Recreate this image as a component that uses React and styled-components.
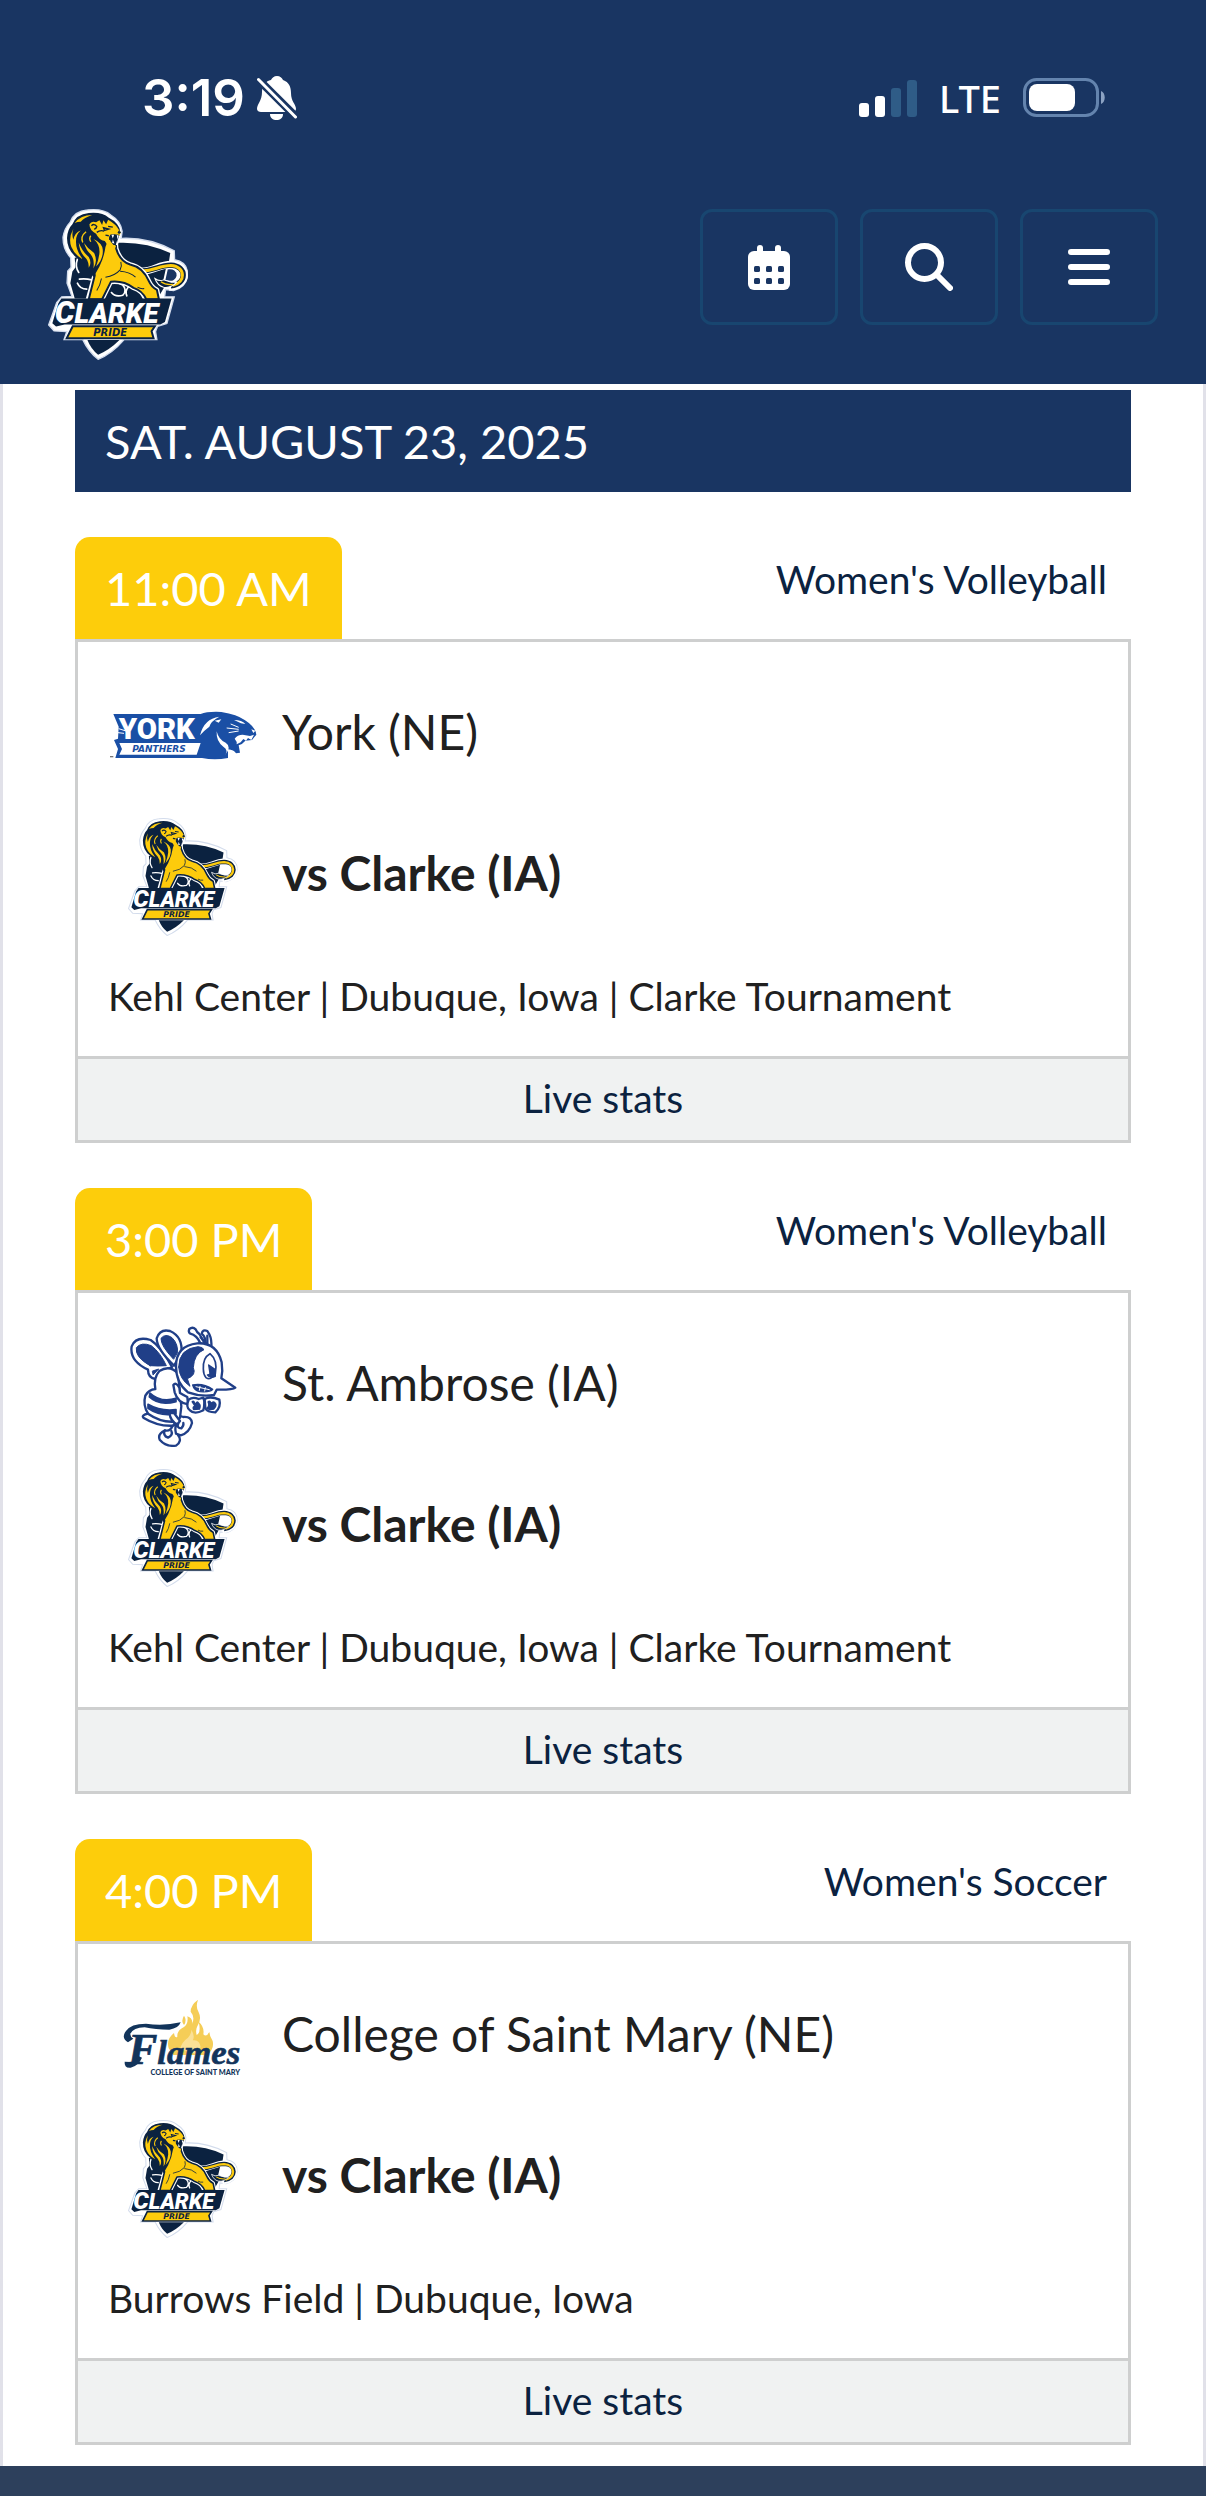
import React from "react";
import styled, { createGlobalStyle } from "styled-components";

const navy = "#193562";
const ink = "#0b2240";
const gold = "#fdcb0c";
const line = "#cecfcf";

const GlobalStyle = createGlobalStyle`
  *, *::before, *::after { box-sizing: border-box; }
  body { margin: 0; background: #ffffff; font-family: Lato, "Open Sans", sans-serif; color: #202020; }
  a { color: ${ink}; text-decoration: none; }
  h2, p { margin: 0; font-weight: 400; }
`;

const Page = styled.div`
  display: flex;
  flex-direction: column;
  min-height: 100vh;
`;

const Header = styled.header`
  background: ${navy};
`;

const StatusBar = styled.div`
  display: flex;
  align-items: center;
  justify-content: space-between;
  padding: 62px 100px 0 142px;
  color: #ffffff;
`;

const StatusGroup = styled.div`
  display: flex;
  align-items: center;
`;

const Clock = styled.span`
  font: 600 51px/72px Inter, sans-serif;
  padding-right: 12px;
`;

const Network = styled.span`
  font: 500 38px/72px "Noto Sans", sans-serif;
  padding: 0 22px;
`;

const Nav = styled.nav`
  display: flex;
  align-items: flex-start;
  justify-content: space-between;
  padding: 75px 48px 24px;
`;

const HomeLink = styled.a`
  display: block;
  height: 151px;
`;

const NavButtons = styled.div`
  display: flex;
  gap: 22px;
`;

const NavButton = styled.button`
  display: flex;
  align-items: center;
  justify-content: center;
  width: 138px;
  height: 116px;
  padding: 0;
  background: transparent;
  color: #ffffff;
  border: 3px solid #184670;
  border-radius: 12px;
`;

const Schedule = styled.main`
  display: flex;
  flex-direction: column;
  gap: 45px;
  padding: 6px 72px 21px;
  border: solid #e1e1e9;
  border-width: 0 3px;
`;

const DateBar = styled.h2`
  padding: 15px 30px;
  background: ${navy};
  color: #ffffff;
  font-size: 47px;
  line-height: 72px;
`;

const GameHead = styled.div`
  display: flex;
  justify-content: space-between;
  align-items: flex-start;
`;

const TimeTab = styled.div`
  padding: 15px 30px;
  background: #fdcd0b;
  color: #ffffff;
  border-radius: 15px 15px 0 0;
  font-size: 47px;
  line-height: 72px;
`;

const SportLink = styled.a`
  padding: 13px 24px;
  font-size: 39px;
  line-height: 58px;
`;

const Card = styled.div`
  border: 3px solid ${line};
`;

const CardBody = styled.div`
  padding: 19px 30px 30px;
`;

const Team = styled.div`
  display: flex;
  align-items: center;
  gap: 24px;
  height: 141px;
  font-size: 48px;
  line-height: 72px;
  font-weight: ${(p) => (p.$home ? 700 : 400)};
`;

const LogoBox = styled.div`
  display: flex;
  align-items: center;
  justify-content: center;
  width: 150px;
  height: 130px;
  padding-top: 8px;
`;

const Venue = styled.p`
  margin-top: 24px;
  font-size: 39px;
  line-height: 59px;
`;

const StatsLink = styled.a`
  display: block;
  border-top: 3px solid ${line};
  background: #f0f2f2;
  padding: 10px 0 12px;
  text-align: center;
  font-size: 39px;
  line-height: 59px;
`;

const BottomBar = styled.footer`
  flex: 1;
  min-height: 30px;
  background: #2d405c;
`;

const BellOff = () => (
  <svg width="40" height="44" viewBox="0 0 40 44" aria-label="Silent">
    <path d="M20 0c3 0 5 2 6 4 6 2 8 7 8 13 0 9 5 11 5 16 0 2-2 3-3 3H4c-2 0-4-1-4-3 0-5 5-8 5-17C5 9 9 5 14 4c1-2 3-4 6-4z" fill="#fff" />
    <path d="M13 38h13c0 4-3 6-6.500 6S13 42 13 38z" fill="#fff" />
    <path d="M2 4l37 37" stroke={navy} strokeWidth="8" />
    <path d="M0 0h5v16H0z" fill={navy} />
    <path d="M1.500 3.500L38.500 41" stroke="#fff" strokeWidth="3" strokeLinecap="round" />
  </svg>
);

const Signal = () => (
  <svg width="58" height="38" viewBox="0 0 58 38" aria-label="Signal">
    <rect x="0" y="24" width="10" height="14" rx="3" fill="#fff" />
    <rect x="16" y="17" width="10" height="21" rx="3" fill="#fff" />
    <rect x="32" y="9" width="10" height="29" rx="3" fill="#2f5c87" />
    <rect x="48" y="1" width="10" height="37" rx="3" fill="#2f5c87" />
  </svg>
);

const Battery = () => (
  <svg width="83" height="40" viewBox="0 0 83 40" aria-label="Battery">
    <rect x="1.500" y="1.500" width="73" height="36" rx="12" fill="none" stroke="#6484ae" strokeWidth="3" />
    <rect x="6" y="6" width="46" height="27" rx="8" fill="#fff" />
    <path d="M78 13c5 2 5 11 0 13z" fill="#8ba2c2" />
  </svg>
);

const CalendarIcon = () => (
  <svg width="42" height="45" viewBox="0 0 42 45" fill="currentColor">
    <rect x="9" y="0" width="6" height="12" rx="3" />
    <rect x="27" y="0" width="6" height="12" rx="3" />
    <rect x="0" y="6" width="42" height="39" rx="6" />
    {[21, 33].map((y) =>
      [6, 18, 30].map((x) => <rect key={`${x}-${y}`} x={x} y={y} width="6" height="6" rx="1.500" fill={navy} />)
    )}
  </svg>
);

const SearchIcon = () => (
  <svg width="48" height="48" viewBox="0 0 48 48" fill="none" stroke="currentColor" strokeWidth="6" strokeLinecap="round">
    <circle cx="19.500" cy="19.500" r="16.500" />
    <path d="M32 32l13 13" />
  </svg>
);

const MenuIcon = () => (
  <svg width="42" height="36" viewBox="0 0 42 36" stroke="currentColor" strokeWidth="6" strokeLinecap="round">
    <path d="M3 3h36M3 18h36M3 33h36" />
  </svg>
);

const ClarkeLogo = ({ height, ground }) => {
  const outline =
    "M90 68Q102 34 142 31Q190 26 212 46Q242 64 246 95L243 116Q325 112 402 153L403 180Q443 187 442 226Q438 262 400 272L376 269L373 291L402 291L380 371L352 379L346 395L350 419L252 419Q215 462 174 478Q145 455 128 419L72 419L80 395L42 393L26 375L50 308L65 291L96 290L81 250L83 214L93 203L92 174Q68 148 69 112Q74 84 90 68Z";
  return (
    <svg height={height} viewBox="24 28 420 452" aria-label="Clarke Pride">
      <path d={outline} fill="#fff" stroke="#d3dcec" strokeWidth="4" />
      {/* shield */}
      <path d="M236 129Q318 126 390 160L386 186L372 262L350 300L104 296L91 250L97 215L106 203L104 174L220 150Z" fill={ink} />
      <path d="M142 420H238Q208 450 174 464Q153 448 142 420Z" fill={ink} />
      <path d="M112 178q-8 22 4 40M118 238q20-2 36 2M112 250q8 18 28 18M204 250q26-6 44 6 14 16 0 30-24 6-34-8M264 262q-10 12-4 26" fill="none" stroke="#fff" strokeWidth="5" strokeLinecap="round" />
      {/* tail */}
      <path d="M380 206q32-4 32 22 -6 26-40 14z" fill={ground} stroke="#fff" strokeWidth="6" />
      <path d="M290 214C336 220 352 194 392 194C446 196 446 258 386 262" fill="none" stroke="#fff" strokeWidth="22" />
      <path d="M288 212C336 220 352 196 392 196C442 198 440 254 392 258" fill="none" stroke={ink} strokeWidth="16" />
      <path d="M288 212C336 220 352 197 392 197C438 200 436 250 398 256" fill="none" stroke={gold} strokeWidth="9" />
      <path d="M344 236q14 10 26 4l14 4q16 6 26 2-18 20-40 16-18-4-26-26z" fill={ink} stroke="#fff" strokeWidth="3" />
      <path d="M362 246q14 10 36 8" fill="none" stroke={gold} strokeWidth="4" />
      {/* body */}
      <path d="M180 118L226 118L228 146Q240 186 270 194Q308 202 326 244Q334 262 350 270L356 298H316Q306 272 280 264Q250 242 212 246L186 298H144L164 226L150 180Z" fill="#fff" stroke="#fff" strokeWidth="14" strokeLinejoin="round" />
      <path d="M180 118L226 118L228 146Q240 186 270 194Q308 202 326 244Q334 262 350 270L356 298H318Q306 272 280 264Q250 242 212 246L186 298H146L164 226L150 180Z" fill={gold} stroke={ink} strokeWidth="6" strokeLinejoin="round" />
      <path d="M196 232q28-4 44-22q6-12 2-24M184 236q-4 22-14 36M240 214q30 2 46 18M292 262q10 6 20 4" fill="none" stroke={ink} strokeWidth="3" />
      {/* mane */}
      <path d="M97 74Q108 44 146 40Q186 36 206 54Q238 70 241 98L226 104L204 120L196 142Q192 172 178 200L160 232Q150 214 132 198Q120 184 110 174Q80 150 81 114Q83 88 97 74Z" fill={ink} />
      <path d="M100 86Q84 116 94 142Q104 166 128 178Q106 150 108 122Q108 104 122 92Q104 98 100 120Q94 104 100 86Z" fill={gold} />
      <path d="M104 70Q122 46 156 46Q132 54 122 66Q112 66 104 70Z" fill={gold} />
      <path d="M116 128Q118 158 138 176Q146 186 146 204Q156 190 146 172Q126 154 116 128ZM132 130Q138 152 152 164Q164 178 160 206Q174 184 162 160Q142 146 132 130ZM160 118Q180 134 178 160Q176 178 168 200Q190 178 188 150Q186 130 160 118Z" fill={gold} />
      <path d="M138 96Q120 110 128 128M152 108Q146 116 152 126" fill="none" stroke={gold} strokeWidth="4" />
      {/* face */}
      <path d="M148 74Q154 62 168 68L178 62L186 76L190 62L198 74L204 60Q228 74 236 90L242 98L238 108L226 104L212 104Q204 112 208 124L216 136L228 138L224 148L206 142L194 124Q176 120 168 102Q148 92 148 74Z" fill={gold} />
      <path d="M154 78q8-8 16 2-2 8-8 8M190 84l16 4-13 4zM204 80l14 2M170 98q10-8 22-4M196 106l10 2" fill="none" stroke={ink} strokeWidth="4" />
      <path d="M238 105L226 104L211 105Q205 114 212 126L220 136L229 136L232 122Z" fill={ink} />
      <path d="M214 105l4 11 4-11zM230 106l2 13 4-12zM216 130l2-11 5 12zM227 136l3-13 1 13z" fill="#fff" />
      <path d="M236 92l7 6-6 5-5-4z" fill={ink} />
      {/* name banner */}
      <path d="M64 296H394L374 366L360 374H74L48 380L37 370L55 310Z" fill={ink} />
      <text x="44" y="368" fontFamily="Roboto, sans-serif" fontWeight="900" fontStyle="italic" fontSize="93" fill="#fff">
        C<tspan fontSize="84">LARKE</tspan>
      </text>
      <path d="M98 379H344L334 394L340 415H80Z" fill={gold} stroke={ink} strokeWidth="6" />
      <text x="210" y="408" textAnchor="middle" fontFamily="DejaVu Sans, sans-serif" fontWeight="700" fontStyle="italic" fontSize="30" fill={ink}>PRIDE</text>
    </svg>
  );
};

const YorkLogo = () => (
  <svg width="147" height="50" viewBox="58 65 441 150" aria-label="York Panthers">
    <path d="M68 74H330Q350 66 392 68Q440 76 462 92Q494 112 497 136L484 152L464 154Q454 166 444 168L448 190L436 192Q430 182 412 180V206Q372 214 334 206H74L82 179L70 152L82 148L84 112Z" fill="#1a4fa5" />
    <text x="84" y="149" fontFamily="Roboto, sans-serif" fontWeight="900" fontSize="88" fill="#fff">YORK</text>
    <path d="M86 161H330L318 196H86L94 179Z" fill="#fff" />
    <text x="205" y="188" textAnchor="middle" fontFamily="DejaVu Sans, sans-serif" fontWeight="700" fontStyle="italic" fontSize="27" fill="#1a4fa5">PANTHERS</text>
    <path d="M328 138Q340 88 386 82Q360 96 356 112Q342 122 328 138Z" fill="#fff" />
    <path d="M378 126Q384 152 405 160Q424 172 403 198Q414 182 398 172Q376 156 378 126ZM372 94l20-4l-8 10zM430 92q24 0 34 12l-13-2zM482 120l12 4l-6 7zM432 148q8-12 24-12l22 4l12-4l-8 16l-10-6l-6 8l-8-5l-8 10l-12 6q2-8-6-17z" fill="#fff" />
    <path d="M420 104l24 10M408 116l36 4M414 130l30-5" stroke="#fff" strokeWidth="3" />
    <path d="M84 118l22 7M82 130l18 2" stroke="#fff" strokeWidth="3" />
    <path d="M58 202h10" stroke="#777" strokeWidth="4" />
  </svg>
);

const BeeLogo = () => (
  <svg width="107" height="121" viewBox="58 49 321 363" fill="#fff" stroke="#203f88" strokeWidth="7" strokeLinejoin="round" strokeLinecap="round" aria-label="St. Ambrose">
    {/* wings */}
    <path d="M112 180Q56 154 63 110Q76 78 120 91Q152 112 184 172L168 180Q150 188 134 208Q112 204 112 180Z" />
    <path d="M190 168Q138 118 138 86Q148 56 178 64Q218 82 212 132Z" />
    <path d="M118 168Q72 142 77 114Q92 96 122 108Q150 130 167 168Q142 170 118 168ZM126 184L144 178L128 195Z" fill="#203f88" strokeWidth="3" />
    <path d="M188 148Q150 108 151 86Q164 70 184 84Q204 104 200 130Z" fill="#203f88" strokeWidth="3" />
    {/* feet */}
    <path d="M186 348Q178 366 164 362Q140 372 147 390Q166 412 196 408Q216 394 202 376Q210 354 196 346Z" />
    <path d="M204 318L218 322Q242 320 244 340Q236 370 210 377L196 372Q190 348 202 344Z" />
    <path d="M162 362q-6 16 10 22q16-8 10-20M202 342q-4 14 10 14q8-8 6-16" fill="none" />
    {/* abdomen */}
    <path d="M146 184Q178 164 202 192L212 290L208 324L186 348Q140 350 98 324Q92 316 112 312Q96 286 104 258Q114 240 134 238Q128 204 146 184Z" />
    <path d="M118 250Q150 280 196 266V276Q146 290 116 262ZM112 284Q150 306 196 300V312Q150 322 112 296Z" fill="#203f88" strokeWidth="5" />
    <path d="M112 312Q150 338 188 336M176 310q4 26 24 34l8-10-18-24z" />
    {/* antennae */}
    <path d="M270 102Q258 76 239 72Q232 68 236 58Q246 50 255 59Q258 67 266 73L284 103Z" />
    <path d="M284 104Q286 82 273 72Q276 58 290 64L296 74Q304 90 302 118Z" />
    <path d="M270 83l16 20M290 78v26" />
    {/* head */}
    <path d="M196 170Q196 108 260 101Q318 98 333 158Q337 184 332 206L374 234Q366 241 318 240L310 256Q270 262 232 248Q196 220 196 170Z" />
    <path d="M204 172Q205 116 262 111Q276 112 280 120Q250 132 248 174Q258 196 230 207L238 230Q206 208 204 172Z" fill="#203f88" strokeWidth="3" />
    <path d="M278 178Q276 144 298 132Q322 152 314 192Q300 214 286 204Q278 194 278 178Z" strokeWidth="5" />
    <path d="M294 166l20 14v20q-16 8-24-4q6 0 8-4z" fill="#203f88" strokeWidth="4" />
    <path d="M246 226Q278 220 306 239Q300 248 268 246Q250 242 246 226Z" fill="#203f88" strokeWidth="4" />
    <path d="M256 231l40 9M268 230l-2 12M284 234l-2 10" stroke="#fff" strokeWidth="3" />
    <path d="M208 250Q218 256 230 262L232 284Q202 280 192 248L188 226Q196 216 206 234Z" />
    {/* gloves */}
    <path d="M234 270Q246 260 264 268L278 264Q284 278 278 302Q252 316 238 302Q224 292 234 270Z" />
    <path d="M282 268Q300 258 326 270Q332 292 314 308Q290 308 284 296Z" />
    <path d="M242 276q8-8 12 4q6-10 12 0q8 6 2 20l-20 2q-6-10 2-14zM290 276q8-8 12 2q8-8 14 2q6 8-6 20q-20 4-24-6q10-4 4-18z" fill="#203f88" stroke="none" />
  </svg>
);

const FlamesLogo = () => (
  <svg width="122" height="78" viewBox="66 58 366 234" aria-label="Flames, College of Saint Mary">
    <path d="M206 206Q198 178 222 160Q224 176 232 172Q230 152 252 142Q266 130 262 110Q280 116 276 134Q286 112 272 96Q272 76 294 60Q286 82 296 98Q306 118 292 140Q286 150 290 166Q304 160 296 126Q314 142 310 164Q320 174 328 156Q328 168 338 184Q344 210 320 226H220Z" fill="#f5cd57" />
    <path d="M252 108Q262 122 252 136Q242 124 252 108Z" fill="#f5cd57" />
    <path d="M240 208Q246 186 264 174Q274 164 274 150Q286 170 278 182Q298 178 302 202L286 222Z" fill="#fae096" />
    <text x="84" y="252" fontFamily="Liberation Serif, serif" fontStyle="italic" fontWeight="700" fontSize="104" fill="#12345b" stroke="#12345b" strokeWidth="2">
      <tspan fontSize="132">F</tspan>lames
    </text>
    <path d="M84 188Q62 174 78 154Q92 132 138 132Q190 140 242 128Q236 146 208 150Q166 150 134 143Q100 144 91 162Q90 172 100 177Z" fill="#12345b" />
    <path d="M74 246Q72 266 92 264Q116 258 126 234L114 228Q106 252 92 247Z" fill="#12345b" />
    <text x="286" y="285" textAnchor="middle" fontFamily="Lato, sans-serif" fontWeight="900" fontSize="22" fill="#12345b">COLLEGE OF SAINT MARY</text>
  </svg>
);

const games = [
  { time: "11:00 AM", sport: "Women's Volleyball", team: "York (NE)", Logo: YorkLogo, venue: "Kehl Center | Dubuque, Iowa | Clarke Tournament" },
  { time: "3:00 PM", sport: "Women's Volleyball", team: "St. Ambrose (IA)", Logo: BeeLogo, venue: "Kehl Center | Dubuque, Iowa | Clarke Tournament" },
  { time: "4:00 PM", sport: "Women's Soccer", team: "College of Saint Mary (NE)", Logo: FlamesLogo, venue: "Burrows Field | Dubuque, Iowa" },
];

const Game = ({ time, sport, team, Logo, venue }) => (
  <article>
    <GameHead>
      <TimeTab>{time}</TimeTab>
      <SportLink href="#sport">{sport}</SportLink>
    </GameHead>
    <Card>
      <CardBody>
        <Team>
          <LogoBox><Logo /></LogoBox>
          <span>{team}</span>
        </Team>
        <Team $home>
          <LogoBox><ClarkeLogo height={118} ground="#fff" /></LogoBox>
          <span>vs Clarke (IA)</span>
        </Team>
        <Venue>{venue}</Venue>
      </CardBody>
      <StatsLink href="#stats">Live stats</StatsLink>
    </Card>
  </article>
);

export default function App() {
  return (
    <Page>
      <GlobalStyle />
      <Header>
        <StatusBar>
          <StatusGroup>
            <Clock>3:19</Clock>
            <BellOff />
          </StatusGroup>
          <StatusGroup>
            <Signal />
            <Network>LTE</Network>
            <Battery />
          </StatusGroup>
        </StatusBar>
        <Nav>
          <HomeLink href="#home" aria-label="Home"><ClarkeLogo height={151} ground={navy} /></HomeLink>
          <NavButtons>
            <NavButton aria-label="Calendar"><CalendarIcon /></NavButton>
            <NavButton aria-label="Search"><SearchIcon /></NavButton>
            <NavButton aria-label="Menu"><MenuIcon /></NavButton>
          </NavButtons>
        </Nav>
      </Header>
      <Schedule>
        <DateBar>SAT. AUGUST 23, 2025</DateBar>
        {games.map((g) => <Game key={g.time} {...g} />)}
      </Schedule>
      <BottomBar />
    </Page>
  );
}
